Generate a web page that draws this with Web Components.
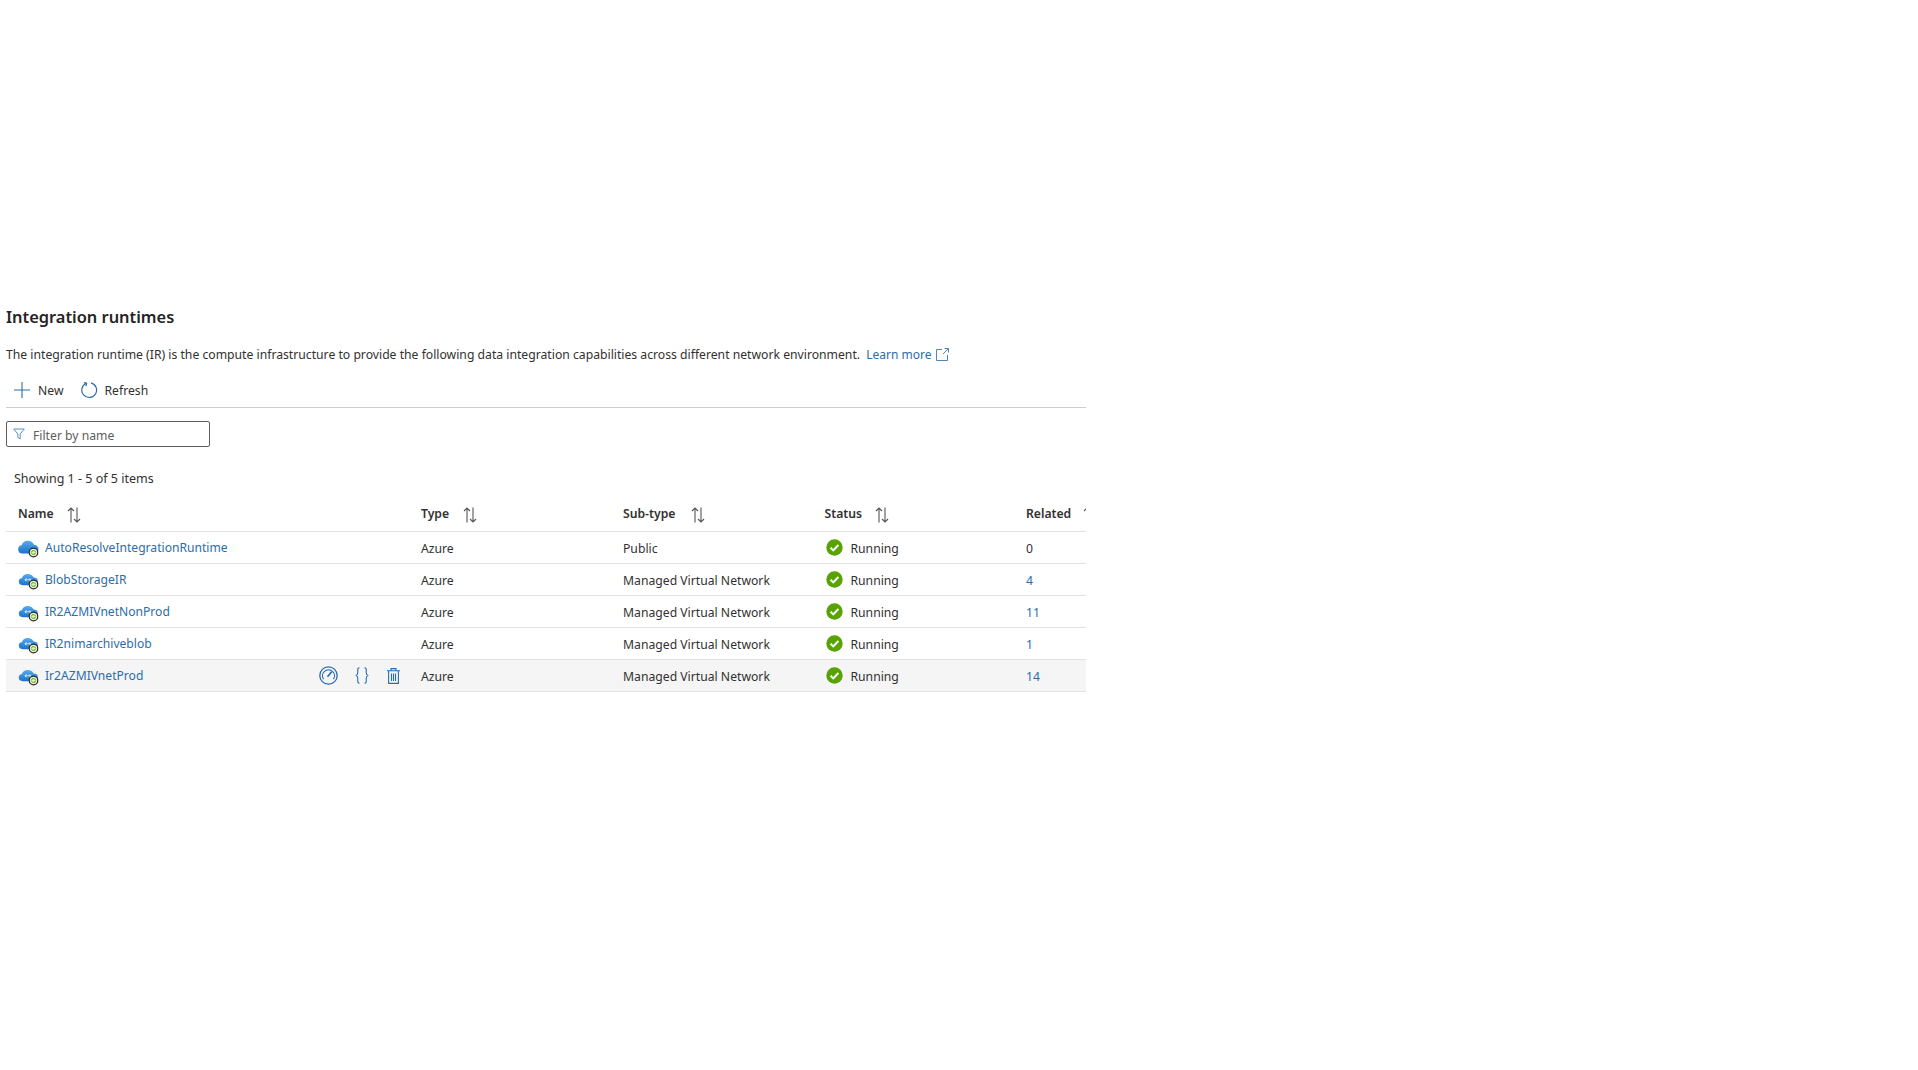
<!DOCTYPE html>
<html lang="en">
<head>
<meta charset="utf-8">
<title>Integration runtimes</title>
<style>
html,body{margin:0;padding:0;background:#fff}
body{font-family:"Noto Sans","Open Sans","Liberation Sans",sans-serif;font-size:13px;color:#323130}
</style>
</head>
<body>
<ir-page>
  <ir-toolbar></ir-toolbar>
  <ir-filter></ir-filter>
  <ir-table></ir-table>
</ir-page>
<script>
const FONT = '"Noto Sans","Open Sans","Liberation Sans",sans-serif';
const LINK = '#2a6dab';
const COLS = 'grid-template-columns:403px 202px 201.5px 201.5px 202px';

class IrPage extends HTMLElement{
  constructor(){super();
    this.attachShadow({mode:'open'}).innerHTML=`
    <style>
      :host{display:block;box-sizing:border-box;width:1086px;height:1070px;padding:305px 0 0 6px;font-family:${FONT};color:#323130}
      h1{margin:0;font-size:16.4px;line-height:24px;font-weight:600;color:#252423}
      p{margin:16px 0 0;font-size:12.2px;line-height:20px;white-space:nowrap}
      a{color:${LINK};text-decoration:none;margin-left:3px;display:inline-flex;align-items:center;gap:4px;font-size:12px}
      a svg{margin-top:-2px}
      svg{display:block}
    </style>
    <h1>Integration runtimes</h1>
    <p>The integration runtime (IR) is the compute infrastructure to provide the following data integration capabilities across different network environment. <a>Learn more <svg width="13" height="13" viewBox="0 0 13 13" fill="none" stroke="#4a86c0" stroke-width="1"><path d="M6 1.500H.5v11h11V7"/><path d="M8.500.5h4v4M12.500.5 7 6"/></svg></a></p>
    <slot></slot>`;
  }
}
class IrToolbar extends HTMLElement{
  constructor(){super();
    this.attachShadow({mode:'open'}).innerHTML=`
    <style>
      :host{display:flex;box-sizing:border-box;align-items:center;height:36px;margin-top:7px;padding:1px 0 0 8px;border-bottom:1px solid #cfcecd;font-size:12.2px;color:#323130}
      .b{display:flex;align-items:center;height:28px}
      svg{display:block}
      .new{gap:8px;margin-right:17px}
      .ref{gap:6px}
    </style>
    <div class="b new"><svg width="16" height="16" viewBox="0 0 16 16" fill="none" stroke="#2a6dab" stroke-width="1.100"><path d="M8 0v16M0 8h16"/></svg><span>New</span></div>
    <div class="b ref"><svg width="18" height="18" viewBox="0 0 18 18" fill="none" stroke="#2a6dab" stroke-width="1.200"><path d="M6.200 2.300A7.400 7.400 0 1 0 11 1.900"/><path d="M3.900 1.600 6.600 2.200 6 5.200"/></svg><span>Refresh</span></div>`;
  }
}
class IrFilter extends HTMLElement{
  constructor(){super();
    this.attachShadow({mode:'open'}).innerHTML=`
    <style>
      :host{display:flex;box-sizing:border-box;align-items:center;gap:8px;width:204px;height:26px;margin-top:13px;padding:2px 0 0 6px;border:1px solid #605e5c;border-radius:2px;font-size:12.2px;color:#605e5c}
      svg{display:block;margin-top:-3px}
    </style>
    <svg width="12" height="12" viewBox="0 0 12 12" fill="none" stroke="#5b8fc4" stroke-width="1"><path d="M.7 1h10.600L7.200 6v4.800L4.800 9.400V6z"/></svg><span>Filter by name</span>`;
  }
}
const sortIcon=`<svg width="14" height="16" viewBox="0 0 14 16" fill="none" stroke="#555" stroke-width="1.100"><path d="M4 15.500V1M1 4 4 1l3 3"/><path d="M10 .5V15M7 12l3 3 3-3"/></svg>`;
const check=`<svg width="17" height="17" viewBox="0 0 17 17"><circle cx="8.500" cy="8.500" r="8.200" fill="#57a300"/><path d="M4.600 8.800 7.300 11.400 12.400 6" fill="none" stroke="#fff" stroke-width="2"/></svg>`;
function cloud(arrows){
  const body='M4.200 15.500a4.200 4.200 0 0 1-.7-8.300A6.700 6.700 0 0 1 16 6.700a4.400 4.400 0 0 1 .3 8.800z';
  const shape=arrows
    ?`<g transform="translate(.6 1.600) scale(.94 .88)"><path d="${body}" fill="url(#g)"/></g><path d="M7 9.800h6M8.400 8.300 7 9.800 8.400 11.300M11.600 8.300 13 9.800 11.600 11.300" fill="none" stroke="#d7ecfb" stroke-width="1"/>`
    :`<path d="${body}" fill="url(#g)"/>`;
  return `<svg class="ic" width="22" height="20" viewBox="0 0 22 20">
  <defs><linearGradient id="g" x1="0" y1="0" x2="0" y2="1"><stop offset="0" stop-color="#5aabea"/><stop offset="1" stop-color="#1b72cc"/></linearGradient></defs>
  ${shape}
  <circle cx="15.500" cy="14.500" r="4.300" fill="#dff0cf" stroke="#2b2b2b" stroke-width="1.200"/>
  <path d="M13.300 14.500a2.200 2.200 0 0 1 4.200-.6M17.700 14.500a2.200 2.200 0 0 1-4.200.6" fill="none" stroke="#57a300" stroke-width="1"/>
</svg>`}
const actions=`
  <svg width="19" height="19" viewBox="0 0 19 19" fill="none" stroke="#2a6dab"><circle cx="9.500" cy="9.500" r="8.700" stroke-width="1.300"/><path d="M4.500 13.200A6 6 0 1 1 14.500 13.200" stroke-width="1.200"/><path d="M8.500 10.700 12.700 5.800" stroke-width="1.700"/></svg>
  <svg class="br" width="14" height="17" viewBox="0 0 14 17" fill="none" stroke="#2a6dab" stroke-width="1.100"><path d="M4.500.8C2.200.8 2.800 3 2.800 5.400 2.800 7.300 2.400 8.100.8 8.500c1.600.4 2 1.200 2 3.100 0 2.400-.6 4.600 1.700 4.600M9.500.8c2.300 0 1.700 2.200 1.700 4.600 0 1.900.4 2.700 2 3.100-1.600.4-2 1.200-2 3.100 0 2.400.6 4.600-1.700 4.600"/></svg>
  <svg width="13" height="16" viewBox="0 0 13 16" fill="none" stroke="#2a6dab" stroke-width="1.100"><path d="M0 2.800h13M4 2.800V.6h5v2.200M1.600 2.800v12.600h9.800V2.800M4.500 5.500v7.500M6.500 5.500v7.500M8.500 5.500v7.500"/></svg>`;

class IrHead extends HTMLElement{
  constructor(){super();
    const gaps={Name:13,Type:14,'Sub-type':16,Status:13,Related:12};
    this.attachShadow({mode:'open'}).innerHTML=`
    <style>
      :host{display:grid;${COLS};height:35px;align-items:center;border-bottom:1px solid #e4e3e2;font-size:12.2px;font-weight:600;color:#323130;overflow:hidden}
      div{display:flex;align-items:center;padding-left:12px;white-space:nowrap}
      svg{display:block;margin-top:3px;flex:none}
    </style>
    ${Object.keys(gaps).map(t=>`<div style="gap:${gaps[t]}px"><span>${t}</span>${sortIcon}</div>`).join('')}`;
  }
}
class IrRow extends HTMLElement{
  constructor(){super();
    const a=n=>this.getAttribute(n);
    const rel=a('related');
    this.attachShadow({mode:'open'}).innerHTML=`
    <style>
      :host{display:grid;box-sizing:border-box;${COLS};height:32px;padding-top:2px;align-items:center;border-bottom:1px solid #e4e3e2;font-size:12.2px;color:#323130;overflow:hidden}
      :host([hovered]){background:#f5f5f5}
      div{padding-left:12px;white-space:nowrap}
      .name{display:flex;align-items:center;padding-left:12px}
      .name a{color:${LINK};margin-left:5px;position:relative;top:-1px;font-size:12.100px}
      .ic{margin-top:-2px}
      .acts{display:flex;align-items:center;margin-left:auto;margin-right:9px;gap:17.500px;margin-top:-2px}
      .acts .br{margin:0 1px 0 -1px}
      .status{display:flex;align-items:center;gap:8px;padding-left:13px}
      .status svg{margin-top:-2px}
      .link{color:${LINK}}
      svg{display:block}
    </style>
    <div class="name">${cloud(a('plain')===null)}<a>${a('name')}</a>${this.hasAttribute('hovered')?`<span class="acts">${actions}</span>`:''}</div>
    <div>${a('type')}</div>
    <div>${a('sub')}</div>
    <div class="status">${check}<span>Running</span></div>
    <div class="${rel==='0'?'':'link'}">${rel}</div>`;
  }
}
class IrTable extends HTMLElement{
  constructor(){super();
    const rows=[
      ['AutoResolveIntegrationRuntime','Public','0',' plain'],
      ['BlobStorageIR','Managed Virtual Network','4',''],
      ['IR2AZMIVnetNonProd','Managed Virtual Network','11',''],
      ['IR2nimarchiveblob','Managed Virtual Network','1',''],
      ['Ir2AZMIVnetProd','Managed Virtual Network','14',' hovered'],
    ];
    this.attachShadow({mode:'open'}).innerHTML=`
    <style>
      :host{display:block;font-size:12.200px}
      .count{padding:23px 0 0 8px;line-height:18px;height:18px;margin-bottom:8px;font-size:12.500px}
    </style>
    <div class="count">Showing 1 - 5 of 5 items</div>
    <ir-head></ir-head>
    ${rows.map(r=>`<ir-row name="${r[0]}" type="Azure" sub="${r[1]}" related="${r[2]}"${r[3]}></ir-row>`).join('')}`;
  }
}
customElements.define('ir-page',IrPage);
customElements.define('ir-toolbar',IrToolbar);
customElements.define('ir-filter',IrFilter);
customElements.define('ir-head',IrHead);
customElements.define('ir-row',IrRow);
customElements.define('ir-table',IrTable);
</script>
</body>
</html>
